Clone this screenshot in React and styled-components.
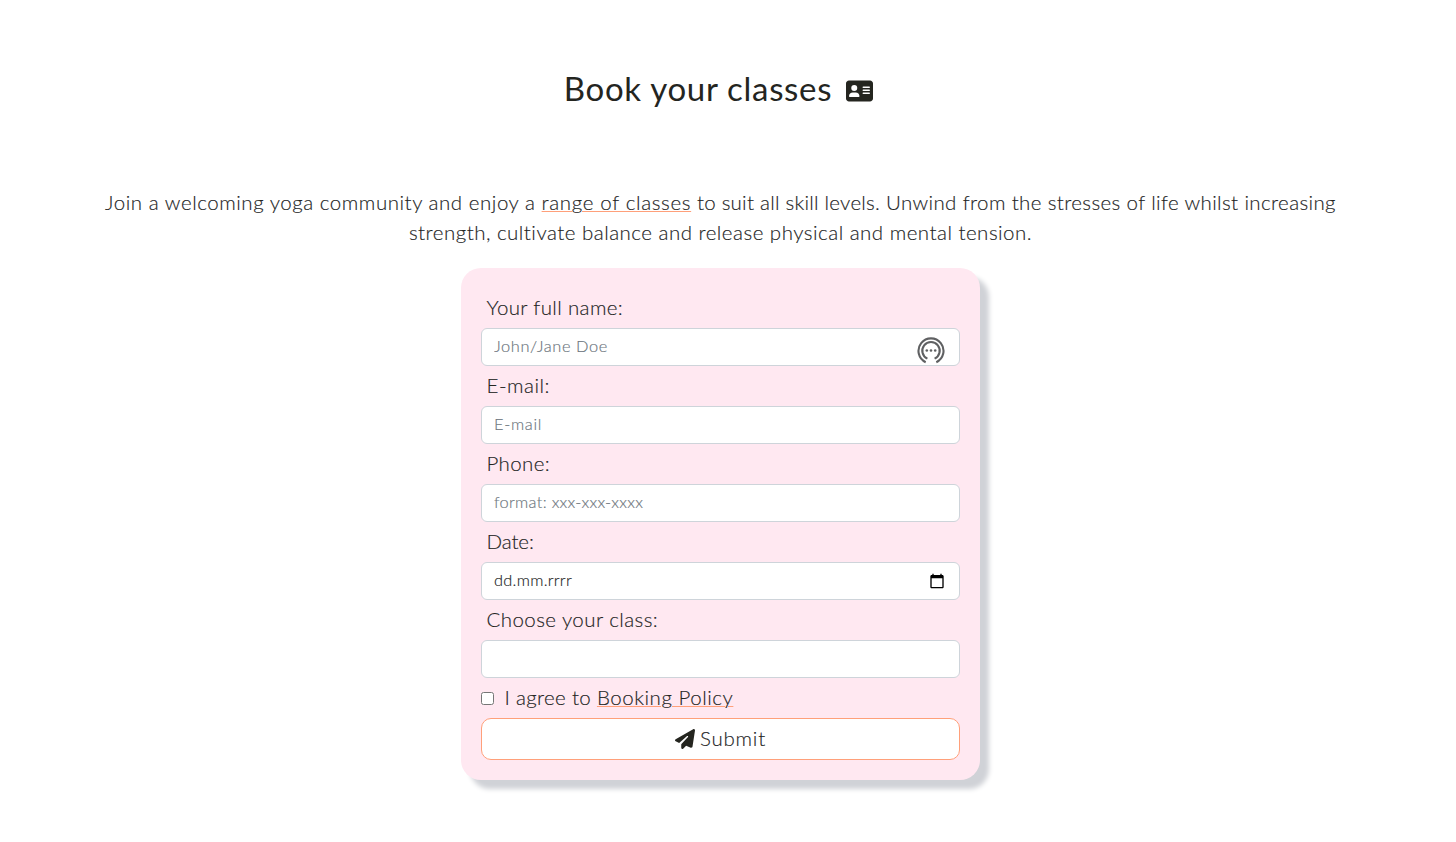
import React from "react";
import styled, { createGlobalStyle } from "styled-components";
import { FaAddressCard, FaPaperPlane } from "react-icons/fa6";

const GlobalStyle = createGlobalStyle`
  *, *::before, *::after { box-sizing: border-box; }
  body {
    margin: 0;
    background: #fff;
    color: #24251f;
    font-family: "Lato", sans-serif;
    font-size: 20.5px;
    font-weight: 300;
    line-height: 30px;
    -webkit-text-stroke: 0.15px;
  }
`;

const Page = styled.main`
  width: 1441px;
  min-height: 842px;
  padding: 69px 100px 0;
  display: flex;
  flex-direction: column;
  align-items: center;
`;

const Heading = styled.h1`
  margin: 0 0 80px;
  padding-right: 4px;
  display: flex;
  align-items: center;
  gap: 14px;
  font-size: 33px;
  font-weight: 400;
  line-height: 38px;
  letter-spacing: 0.7px;
  -webkit-text-stroke: 0;

  svg {
    width: 27px;
    height: 24px;
    margin-top: 6px;
  }
`;

const Intro = styled.p`
  margin: 0 0 21px;
  text-align: center;
  white-space: nowrap;
`;

const Tracked = styled.span`
  letter-spacing: ${(p) => p.$spacing}px;
`;

const Link = styled.a`
  color: inherit;
  letter-spacing: ${(p) => p.$spacing}px;
  text-decoration: underline 1px #ffa07a;
  text-underline-offset: 1px;
`;

const Form = styled.form`
  width: 519px;
  padding: 20px;
  display: flex;
  flex-direction: column;
  background: #ffe8f1;
  border-radius: 20px;
  box-shadow: 9px 9px 5px #d0d2d7;
`;

const Label = styled.label`
  height: 40px;
  padding-left: 5.5px;
  line-height: 38px;
  letter-spacing: ${(p) => p.$spacing}px;
`;

const Control = styled.div`
  height: 38px;
  padding: 0 14px 0 12px;
  display: flex;
  align-items: center;
  justify-content: space-between;
  background: #fff;
  border: 1px solid #ced4da;
  border-radius: 6px;
  font-size: 16.4px;
  line-height: 24px;
  letter-spacing: ${(p) => p.$spacing}px;
`;

const Input = styled.input`
  flex: 1;
  min-width: 0;
  height: 24px;
  margin-bottom: 2px;
  padding: 0;
  border: 0;
  outline: 0;
  background: transparent;
  color: inherit;
  font: inherit;
  letter-spacing: inherit;

  &::placeholder {
    color: #6c757d;
    opacity: 1;
  }
`;

const DateText = styled.span`
  margin-bottom: 2px;
`;

const Agreement = styled.div`
  height: 40px;
  display: flex;
  align-items: center;
  white-space: pre;
`;

const AgreementText = styled.label`
  margin-bottom: 2px;
`;

const Checkbox = styled.input`
  width: 13px;
  height: 13px;
  margin: 0 10.5px 0 0;
`;

const SubmitButton = styled.button`
  height: 42px;
  padding: 0;
  display: flex;
  align-items: center;
  justify-content: center;
  gap: 5px;
  background: #fff;
  border: 1px solid #ffa07a;
  border-radius: 10px;
  color: inherit;
  font: inherit;
  letter-spacing: 0.77px;
`;

const SubmitText = styled.span`
  margin-bottom: 2px;
`;

const PasswordSvg = styled.svg`
  margin-top: 7px;
`;

const PasswordIcon = () => (
  <PasswordSvg width="28" height="28" viewBox="0 0 28 28" fill="none" stroke="#5f6062" strokeWidth="2.1">
    <path d="M8.7 25.2A12.5 12.5 0 1 1 19.3 25.2" />
    <path d="M10.4 21.6A8.7 8.7 0 1 1 17.6 21.6" />
    <g fill="#5f6062" stroke="none">
      <circle cx="9.8" cy="13.5" r="1.3" />
      <circle cx="14" cy="13.5" r="1.3" />
      <circle cx="18.2" cy="13.5" r="1.3" />
    </g>
  </PasswordSvg>
);

const CalendarIcon = () => (
  <svg width="16" height="16" viewBox="0 0 24 24" fill="#000">
    <path d="M20 3h-1V1h-2v2H7V1H5v2H4c-1.1 0-2 .9-2 2v16c0 1.1.9 2 2 2h16c1.1 0 2-.9 2-2V5c0-1.1-.9-2-2-2zm0 18H4V8h16v13z" />
  </svg>
);

export default function App() {
  return (
    <>
      <GlobalStyle />
      <Page>
        <Heading>
          Book your classes
          <FaAddressCard />
        </Heading>
        <Intro>
          <Tracked $spacing={0.537}>Join a welcoming yoga community and enjoy a </Tracked>
          <Link $spacing={0.644}>range of classes</Link>
          <Tracked $spacing={0.24}> to suit all skill levels. </Tracked>
          <Tracked $spacing={0.37}>Unwind from the stresses of life whilst increasing</Tracked>
          <br />
          <Tracked $spacing={0.485}>strength, cultivate balance and release physical and mental tension.</Tracked>
        </Intro>
        <Form>
          <Label htmlFor="name" $spacing={0.35}>Your full name:</Label>
          <Control $spacing={0.59}>
            <Input id="name" placeholder="John/Jane Doe" />
            <PasswordIcon />
          </Control>
          <Label htmlFor="email" $spacing={0.5}>E-mail:</Label>
          <Control $spacing={0.67}>
            <Input id="email" placeholder="E-mail" />
          </Control>
          <Label htmlFor="phone" $spacing={0.35}>Phone:</Label>
          <Control $spacing={0.3}>
            <Input id="phone" placeholder="format: xxx-xxx-xxxx" />
          </Control>
          <Label $spacing={-0.1}>Date:</Label>
          <Control $spacing={0.27}>
            <DateText>dd.mm.rrrr</DateText>
            <CalendarIcon />
          </Control>
          <Label $spacing={0.42}>Choose your class:</Label>
          <Control />
          <Agreement>
            <Checkbox type="checkbox" id="policy" />
            <AgreementText htmlFor="policy">
              <Tracked $spacing={0.32}>I agree to </Tracked>
              <Link $spacing={0.53}>Booking Policy</Link>
            </AgreementText>
          </Agreement>
          <SubmitButton type="button">
            <FaPaperPlane size={20} />
            <SubmitText>Submit</SubmitText>
          </SubmitButton>
        </Form>
      </Page>
    </>
  );
}
